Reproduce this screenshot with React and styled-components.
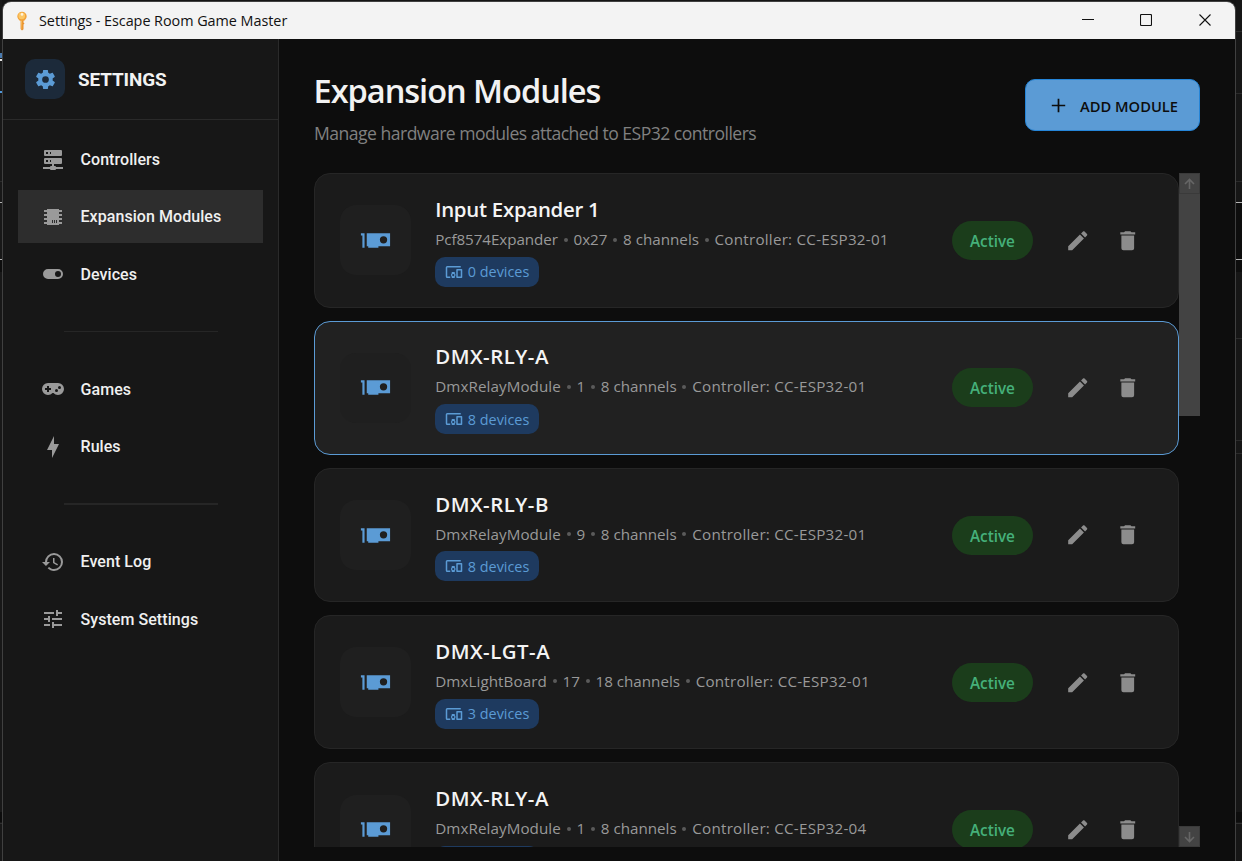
import React from "react";
import styled, { createGlobalStyle } from "styled-components";

const icons = {
  cog: "M12,15.5A3.5,3.5 0 0,1 8.5,12A3.5,3.5 0 0,1 12,8.5A3.5,3.5 0 0,1 15.5,12A3.5,3.5 0 0,1 12,15.5M19.43,12.97C19.47,12.65 19.5,12.33 19.5,12C19.5,11.67 19.47,11.34 19.43,11L21.54,9.37C21.73,9.22 21.78,8.95 21.66,8.73L19.66,5.27C19.54,5.05 19.27,4.96 19.05,5.05L16.56,6.05C16.04,5.66 15.5,5.32 14.87,5.07L14.5,2.42C14.46,2.18 14.25,2 14,2H10C9.75,2 9.54,2.18 9.5,2.42L9.13,5.07C8.5,5.32 7.96,5.66 7.44,6.05L4.95,5.05C4.73,4.96 4.46,5.05 4.34,5.27L2.34,8.73C2.21,8.95 2.27,9.22 2.46,9.37L4.57,11C4.53,11.34 4.5,11.67 4.5,12C4.5,12.33 4.53,12.65 4.57,12.97L2.46,14.63C2.27,14.78 2.21,15.05 2.34,15.27L4.34,18.73C4.46,18.95 4.73,19.03 4.95,18.95L7.44,17.94C7.96,18.34 8.5,18.68 9.13,18.93L9.5,21.58C9.54,21.82 9.75,22 10,22H14C14.25,22 14.46,21.82 14.5,21.58L14.87,18.93C15.5,18.67 16.04,18.34 16.56,17.94L19.05,18.95C19.27,19.03 19.54,18.95 19.66,18.73L21.66,15.27C21.78,15.05 21.73,14.78 21.54,14.63L19.43,12.97Z",
  server: "M13,19H14A1,1 0 0,1 15,20H22V22H15A1,1 0 0,1 14,23H10A1,1 0 0,1 9,22H2V20H9A1,1 0 0,1 10,19H11V17H4A1,1 0 0,1 3,16V12A1,1 0 0,1 4,11H20A1,1 0 0,1 21,12V16A1,1 0 0,1 20,17H13V19M4,3H20A1,1 0 0,1 21,4V8A1,1 0 0,1 20,9H4A1,1 0 0,1 3,8V4A1,1 0 0,1 4,3M9,7H10V5H9V7M9,15H10V13H9V15M5,5V7H7V5H5M5,13V15H7V13H5Z",
  chip: "M6,4H18V5H21V7H18V9H21V11H18V13H21V15H18V17H21V19H18V20H6V19H3V17H6V15H3V13H6V11H3V9H6V7H3V5H6V4M11,15V18H12V15H11M13,15V18H14V15H13M15,15V18H16V15H15Z",
  toggle: "M17,7H7A5,5 0 0,0 2,12A5,5 0 0,0 7,17H17A5,5 0 0,0 22,12A5,5 0 0,0 17,7M17,15A3,3 0 0,1 14,12A3,3 0 0,1 17,9A3,3 0 0,1 20,12A3,3 0 0,1 17,15Z",
  gamepad: "M7,6H17A6,6 0 0,1 23,12A6,6 0 0,1 17,18C15.22,18 13.63,17.23 12.53,16H11.47C10.37,17.23 8.78,18 7,18A6,6 0 0,1 1,12A6,6 0 0,1 7,6M6,9V11H4V13H6V15H8V13H10V11H8V9H6M15.5,12A1.5,1.5 0 0,0 14,13.5A1.5,1.5 0 0,0 15.5,15A1.5,1.5 0 0,0 17,13.5A1.5,1.5 0 0,0 15.5,12M18.5,9A1.5,1.5 0 0,0 17,10.5A1.5,1.5 0 0,0 18.5,12A1.5,1.5 0 0,0 20,10.5A1.5,1.5 0 0,0 18.5,9Z",
  bolt: "M11 15H6L13 1V9H18L11 23V15Z",
  history: "M13.5,8H12V13L16.28,15.54L17,14.33L13.5,12.25V8M13,3A9,9 0 0,0 4,12H1L4.96,16.03L9,12H6A7,7 0 0,1 13,5A7,7 0 0,1 20,12A7,7 0 0,1 13,19C11.07,19 9.32,18.21 8.06,16.94L6.64,18.36C8.27,20 10.5,21 13,21A9,9 0 0,0 22,12A9,9 0 0,0 13,3",
  tune: "M3,17V19H9V17H3M3,5V7H13V5H3M13,21V19H21V17H13V15H11V21H13M7,9V11H3V13H7V15H9V9H7M21,13V11H11V13H21M15,9H17V7H21V5H17V3H15V9Z",
  plus: "M19,12.9H12.9V19H11.1V12.9H5V11.1H11.1V5H12.9V11.1H19V12.9Z",
  card: "M2,7V8.5H3V17H4.5V7H2M6,7V16H7V17H14V16H22V7H6M17.5,9A2.5,2.5 0 0,1 20,11.5A2.5,2.5 0 0,1 17.5,14A2.5,2.5 0 0,1 15,11.5A2.5,2.5 0 0,1 17.5,9Z",
  devices: "M3,6H21V4H3A2,2 0 0,0 1,6V18A2,2 0 0,0 3,20H7V18H3V6M13,12H9V13.78C8.39,14.33 8,15.11 8,16C8,16.89 8.39,17.67 9,18.22V20H13V18.22C13.61,17.67 14,16.88 14,16C14,15.12 13.61,14.33 13,13.78V12M11,17.5A1.5,1.5 0 0,1 9.5,16A1.5,1.5 0 0,1 11,14.5A1.5,1.5 0 0,1 12.5,16A1.5,1.5 0 0,1 11,17.5M22,8H16A1,1 0 0,0 15,9V19A1,1 0 0,0 16,20H22A1,1 0 0,0 23,19V9A1,1 0 0,0 22,8M21,18H17V10H21V18Z",
  pencil: "M20.71,7.04C21.1,6.65 21.1,6 20.71,5.63L18.37,3.29C18,2.9 17.35,2.9 16.96,3.29L15.12,5.12L18.87,8.87M3,17.25V21H6.75L17.81,9.93L14.06,6.18L3,17.25Z",
  trash: "M19,4H15.5L14.5,3H9.5L8.5,4H5V6H19M6,19A2,2 0 0,0 8,21H16A2,2 0 0,0 18,19V7H6V19Z",
};

const navGroups = [
  [
    { icon: "server", label: "Controllers" },
    { icon: "chip", label: "Expansion Modules", active: true },
    { icon: "toggle", label: "Devices" },
  ],
  [
    { icon: "gamepad", label: "Games" },
    { icon: "bolt", label: "Rules" },
  ],
  [
    { icon: "history", label: "Event Log" },
    { icon: "tune", label: "System Settings" },
  ],
];

const modules = [
  { name: "Input Expander 1", type: "Pcf8574Expander", address: "0x27", channels: 8, controller: "CC-ESP32-01", devices: 0 },
  { name: "DMX-RLY-A", type: "DmxRelayModule", address: "1", channels: 8, controller: "CC-ESP32-01", devices: 8, selected: true },
  { name: "DMX-RLY-B", type: "DmxRelayModule", address: "9", channels: 8, controller: "CC-ESP32-01", devices: 8 },
  { name: "DMX-LGT-A", type: "DmxLightBoard", address: "17", channels: 18, controller: "CC-ESP32-01", devices: 3 },
  { name: "DMX-RLY-A", type: "DmxRelayModule", address: "1", channels: 8, controller: "CC-ESP32-04", devices: 8 },
];

const Icon = ({ name, size }) => (
  <Svg viewBox="0 0 24 24" $size={size}>
    <path d={icons[name]} />
  </Svg>
);

const KeyIcon = () => (
  <KeySvg viewBox="0 0 12 20">
    <path d="M4.6 9h2.9v2.5l1 1-1 1v4.7L6 19.4 4.6 18z" fill="#e8912d" />
    <path d="M5.1 9h1v9.2l-.5-.3z" fill="#fbc463" />
    <path d="M6 .8a4.6 4.6 0 0 1 4.7 4.4c0 1.9-1.2 3-2.5 4.6H3.8C2.500 8.200 1.300 7.100 1.300 5.200A4.600 4.600 0 0 1 6 .8z" fill="#f2a33a" />
    <circle cx="5.700" cy="4.900" r="3.300" fill="#fcc765" />
    <circle cx="6" cy="3.400" r="1.300" fill="#fff3dc" />
  </KeySvg>
);

const TitleBar = () => (
  <Bar>
    <KeyIcon />
    <BarTitle>Settings - Escape Room Game Master</BarTitle>
    <WindowButton>
      <svg width="12" height="12"><path d="M0 5.5h12" /></svg>
    </WindowButton>
    <WindowButton>
      <svg width="12" height="12"><rect x="0.5" y="0.5" width="11" height="11" rx="1" /></svg>
    </WindowButton>
    <WindowButton>
      <svg width="12" height="12"><path d="M0.5 0.5l11 11M11.5 0.5l-11 11" /></svg>
    </WindowButton>
  </Bar>
);

const Sidebar = () => (
  <Side>
    <SideHeader>
      <Badge>
        <Icon name="cog" size={23} />
      </Badge>
      <SideTitle>SETTINGS</SideTitle>
    </SideHeader>
    <Nav>
      {navGroups.map((group, i) => (
        <NavGroup key={i}>
          {group.map((item) => (
            <NavItem key={item.label} $active={item.active}>
              <Icon name={item.icon} size={24} />
              {item.label}
            </NavItem>
          ))}
        </NavGroup>
      ))}
    </Nav>
  </Side>
);

const ModuleCard = ({ module }) => {
  const dmx = module.name.startsWith("DMX");
  return (
    <Card $selected={module.selected}>
      <CardIcon>
        <Icon name="card" size={35} />
      </CardIcon>
      <CardBody>
        <CardTitle $wide={dmx}>{module.name}</CardTitle>
        <Meta>
          <Type $wide={dmx}>{module.type}</Type>
          <Dot />
          <span>{module.address}</span>
          <Dot />
          <span>{module.channels} channels</span>
          <Dot />
          <Owner>Controller: {module.controller}</Owner>
        </Meta>
        <Chip>
          <Icon name="devices" size={18} />
          {module.devices} devices
        </Chip>
      </CardBody>
      <Status>Active</Status>
      <IconButton>
        <Icon name="pencil" size={25.5} />
      </IconButton>
      <IconButton>
        <Icon name="trash" size={25.5} />
      </IconButton>
    </Card>
  );
};

const App = () => {
  return (
    <Desktop>
      <GlobalStyle />
      <LeftEdge />
      <Window>
        <TitleBar />
        <Main>
          <Sidebar />
          <Content>
            <Header>
              <div>
                <Title>Expansion Modules</Title>
                <Subtitle>Manage hardware modules attached to ESP32 controllers</Subtitle>
              </div>
              <AddButton>
                <Icon name="plus" size={23} />
                <span>ADD MODULE</span>
              </AddButton>
            </Header>
            <ListArea>
              <List>
                {modules.map((module, i) => (
                  <ModuleCard key={i} module={module} />
                ))}
              </List>
              <Scrollbar>
                <ScrollButton>
                  <svg width="11" height="12"><path d="M5.5 11V1.5M1 6l4.5-4.5L10 6" /></svg>
                </ScrollButton>
                <Thumb />
                <ScrollButton>
                  <svg width="11" height="12"><path d="M5.5 1v9.5M1 6l4.5 4.5L10 6" /></svg>
                </ScrollButton>
              </Scrollbar>
            </ListArea>
          </Content>
        </Main>
      </Window>
      <RightEdge />
    </Desktop>
  );
};

const GlobalStyle = createGlobalStyle`
  * {
    box-sizing: border-box;
  }
  body {
    margin: 0;
    overflow: hidden;
    background: #141414;
    font-family: "Open Sans", "Noto Sans", sans-serif;
  }
  h1, h2, p {
    margin: 0;
  }
`;

const Desktop = styled.div`
  display: flex;
  width: 1242px;
  height: 861px;
  overflow: hidden;
`;

const LeftEdge = styled.div`
  width: 2px;
  background:
    linear-gradient(#4a7bb0, #4a7bb0) 0 53px / 2px 5px no-repeat,
    linear-gradient(#e4e4e4, #e4e4e4) 0 59px / 2px 2px no-repeat,
    linear-gradient(#4f97da, #4f97da) 0 91px / 2px 2px no-repeat,
    linear-gradient(#2c2c2c, #2c2c2c) 0 181px / 2px 1px no-repeat,
    linear-gradient(#b4b4b4, #b4b4b4) 0 202px / 2px 1px no-repeat,
    linear-gradient(#b4b4b4, #b4b4b4) 0 259px / 2px 1px no-repeat,
    linear-gradient(#0d0d0d, #0d0d0d) 0 260px / 2px 12px no-repeat,
    linear-gradient(#0c0c0c, #0c0c0c) 0 812px / 2px 10px no-repeat,
    linear-gradient(#303030, #303030) 0 823px / 2px 1px no-repeat,
    #181818;
`;

const RightEdge = styled.div`
  width: 6px;
  background:
    linear-gradient(#2b2b2b, #2b2b2b) 0 31px / 6px 1px no-repeat,
    linear-gradient(#2b2b2b, #2b2b2b) 0 93px / 6px 1px no-repeat,
    linear-gradient(#2b2b2b, #2b2b2b) 0 181px / 6px 1px no-repeat,
    linear-gradient(#b4b4b4, #b4b4b4) 0 202px / 6px 1px no-repeat,
    linear-gradient(#b4b4b4, #b4b4b4) 0 259px / 6px 1px no-repeat,
    linear-gradient(#0d0d0d, #0d0d0d) 0 203px / 6px 69px no-repeat,
    linear-gradient(#2b2b2b, #2b2b2b) 0 338px / 6px 1px no-repeat,
    linear-gradient(#2b2b2b, #2b2b2b) 0 440px / 6px 1px no-repeat,
    linear-gradient(#2b2b2b, #2b2b2b) 0 453px / 6px 1px no-repeat,
    linear-gradient(#0d0d0d, #0d0d0d) 0 812px / 6px 10px no-repeat,
    linear-gradient(#303030, #303030) 0 823px / 6px 1px no-repeat,
    #161616;
`;

const Window = styled.div`
  flex: 1;
  display: flex;
  flex-direction: column;
  margin-top: 1px;
  border: 1px solid #404040;
  border-bottom: none;
  border-radius: 9px 9px 0 0;
  overflow: hidden;
  background: #0d0d0d;
`;

const Bar = styled.div`
  display: flex;
  align-items: center;
  height: 37px;
  padding: 0 1px 0 13px;
  background: #f3f3f3;
`;

const BarTitle = styled.span`
  flex: 1;
  margin-left: 11px;
  font-size: 14.4px;
  letter-spacing: -0.04px;
  color: #111;
`;

const WindowButton = styled.div`
  display: flex;
  justify-content: center;
  width: 58.5px;
  margin-top: -1px;
  svg {
    fill: none;
    stroke: #111;
    stroke-width: 1.1;
  }
`;

const Main = styled.div`
  flex: 1;
  display: flex;
  min-height: 0;
`;

const Side = styled.div`
  width: 276px;
  background: #171717;
  border-right: 1px solid #2a2a2a;
`;

const SideHeader = styled.div`
  display: flex;
  align-items: center;
  height: 81px;
  padding-left: 22.4px;
  border-bottom: 1px solid #2a2a2a;
`;

const Badge = styled.div`
  display: flex;
  align-items: center;
  justify-content: center;
  width: 40px;
  height: 40px;
  border-radius: 10px;
  background: #1c2a3a;
  color: #5b9bd5;
`;

const SideTitle = styled.h2`
  margin-left: 12.6px;
  font: 700 18.9px Roboto, sans-serif;
  letter-spacing: -0.1px;
  color: #f2f2f2;
`;

const Nav = styled.div`
  padding: 12.7px 15px 0;
`;

const NavGroup = styled.div`
  & + &::before {
    content: "";
    display: block;
    height: 1.4px;
    margin: 30px 45.5px 30.6px;
    background: #262626;
  }
`;

const NavItem = styled.div`
  display: flex;
  align-items: center;
  gap: 15.5px;
  height: 53px;
  margin-bottom: 4.5px;
  padding-left: 23px;
  background: ${(props) => (props.$active ? "#2d2d2d" : "transparent")};
  color: #f0f0f0;
  font: 500 16px Roboto, sans-serif;
  letter-spacing: 0.06px;
  svg {
    color: #9a9a9a;
  }
`;

const Content = styled.div`
  flex: 1;
  display: flex;
  flex-direction: column;
  min-width: 0;
  padding: 40px 35px 14px 35px;
`;

const Header = styled.div`
  display: flex;
  justify-content: space-between;
  height: 94.3px;
`;

const Title = styled.h1`
  margin-left: -0.5px;
  margin-top: -10px;
  font-size: 32.6px;
  font-weight: 570;
  line-height: 44px;
  letter-spacing: -1.04px;
  color: #f2f2f2;
`;

const Subtitle = styled.p`
  margin-top: 7.6px;
  font-size: 17.6px;
  line-height: 24px;
  letter-spacing: -0.53px;
  color: #808080;
`;

const AddButton = styled.div`
  display: flex;
  align-items: center;
  gap: 10px;
  width: 175px;
  height: 52px;
  padding-left: 21px;
  border: 1px solid #2585d8;
  border-radius: 10px;
  background: #5b9bd5;
  color: #0d0d0d;
  font-size: 14.7px;
  font-weight: 550;
  white-space: nowrap;
  span {
    padding-top: 1px;
  }
`;

const ListArea = styled.div`
  flex: 1;
  display: flex;
  min-height: 0;
`;

const List = styled.div`
  flex: 1;
  display: flex;
  flex-direction: column;
  gap: 13px;
  overflow: hidden;
`;

const Card = styled.div`
  flex: none;
  display: flex;
  align-items: center;
  height: 134.3px;
  padding: 0 25px;
  border: 1px solid ${(props) => (props.$selected ? "#5b9bd5" : "#262626")};
  border-radius: 16px;
  background: ${(props) => (props.$selected ? "#212121" : "#1b1b1b")};
`;

const CardIcon = styled.div`
  display: flex;
  align-items: center;
  justify-content: center;
  width: 71px;
  height: 70px;
  border-radius: 16px;
  background: #1f1f1f;
  color: #5b9bd5;
`;

const CardBody = styled.div`
  flex: 1;
  display: flex;
  flex-direction: column;
  align-items: flex-start;
  margin-left: 24.2px;
`;

const CardTitle = styled.h2`
  padding-top: 1px;
  font-size: 20.4px;
  font-weight: 600;
  line-height: 29px;
  letter-spacing: ${(props) => (props.$wide ? "0.5px" : "-0.26px")};
  color: #f4f4f4;
`;

const Meta = styled.div`
  display: flex;
  align-items: center;
  margin-top: 5px;
  font-size: 15.2px;
  line-height: 20px;
  color: #999;
`;

const Type = styled.span`
  letter-spacing: ${(props) => (props.$wide ? "0.08px" : "-0.07px")};
`;

const Dot = styled.span`
  width: 4px;
  height: 4px;
  margin: 1px 5.8px 0;
  border-radius: 50%;
  background: #5a5a5a;
`;

const Owner = styled.span`
  letter-spacing: 0.24px;
`;

const Chip = styled.div`
  display: flex;
  align-items: center;
  gap: 4.6px;
  height: 30px;
  margin-top: 7.7px;
  padding: 0 10px;
  border-radius: 10px;
  background: #1e3a5f;
  color: #5b9bd5;
  font-size: 14.4px;
`;

const Status = styled.div`
  display: flex;
  align-items: center;
  justify-content: center;
  width: 80.4px;
  height: 39px;
  margin-right: 20px;
  padding-top: 1.5px;
  border-radius: 20px;
  background: #1b3d1b;
  color: #45b07a;
  font-size: 15.3px;
  font-weight: 600;
`;

const IconButton = styled.div`
  display: flex;
  justify-content: center;
  width: 50.2px;
  color: #8c8c8c;
`;

const Scrollbar = styled.div`
  display: flex;
  flex-direction: column;
  justify-content: space-between;
  width: 21px;
`;

const ScrollButton = styled.div`
  display: flex;
  align-items: center;
  justify-content: center;
  height: 21px;
  border: 1px solid #3a3a3a;
  background: #434343;
  svg {
    fill: none;
    stroke: #666;
    stroke-width: 1.6;
  }
`;

const Thumb = styled.div`
  height: 222px;
  margin-bottom: auto;
  background: #434343;
`;

const Svg = styled.svg`
  flex: none;
  width: ${(props) => props.$size}px;
  height: ${(props) => props.$size}px;
  fill: currentColor;
  fill-rule: evenodd;
`;

const KeySvg = styled.svg`
  width: 12px;
  height: 20px;
`;

export default App;
